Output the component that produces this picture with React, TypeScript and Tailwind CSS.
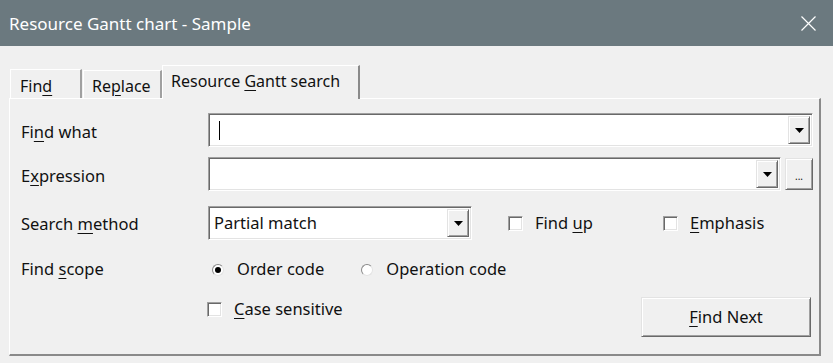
import React from 'react';

const sunken =
  'border-t border-l border-t-[#a0a0a0] border-l-[#a0a0a0] border-b border-r border-b-white border-r-white shadow-[inset_1px_1px_0_#696969,inset_-1px_-1px_0_#e3e3e3]';
const raised =
  'border-t border-l border-t-[#e3e3e3] border-l-[#e3e3e3] border-b border-r border-b-[#696969] border-r-[#696969] shadow-[inset_1px_1px_0_#ffffff,inset_-1px_-1px_0_#a0a0a0]';

function Arrow() {
  return (
    <div className={`${raised} w-[22px] h-full bg-[#f0f0f0] flex items-center justify-center`}>
      <svg width="9" height="5" viewBox="0 0 9 5">
        <path d="M0 0h9L4.5 5z" fill="#000" />
      </svg>
    </div>
  );
}

function Combo({ width, text, caret }: { width: string; text?: string; caret?: boolean }) {
  return (
    <div className={`${sunken} ${width} shrink-0 h-[34px] bg-white flex items-stretch p-[2px]`}>
      <div className="flex-1 flex items-center pl-[3px] pt-[1px]">
        {caret && <span className="w-px h-[19px] bg-black ml-[5px]" />}
        {text}
      </div>
      <Arrow />
    </div>
  );
}

function Check({ label, u, rest }: { label: string; u: string; rest: string }) {
  return (
    <div className="flex items-center h-[22px] whitespace-nowrap shrink-0">
      <span className={`${sunken} w-[15px] h-[15px] bg-white shrink-0`} />
      <span className="ml-[12px]">
        {label}
        <u className="underline-offset-[3px]">{u}</u>
        {rest}
      </span>
    </div>
  );
}

function Radio({ on, children }: { on?: boolean; children: React.ReactNode }) {
  return (
    <div className="flex items-center whitespace-nowrap">
      <span className="w-[12px] h-[12px] rounded-full bg-white border border-t-[#8a8a8a] border-l-[#8a8a8a] border-b-[#e3e3e3] border-r-[#e3e3e3] flex items-center justify-center">
        {on && <span className="w-[6px] h-[6px] rounded-full bg-black" />}
      </span>
      <span className="ml-[13px]">{children}</span>
    </div>
  );
}

export default function App() {
  return (
    <div
      className="w-[833px] h-[363px] bg-[#f0f0f0] overflow-hidden text-[16.5px] text-[#111]"
      style={{ fontFamily: '"Noto Sans", sans-serif' }}
    >
      <div className="h-[46px] bg-[#6b797f] flex items-center justify-between pl-[9px] pr-[17px]">
        <span className="text-white text-[17px] mt-[1px]">Resource Gantt chart - Sample</span>
        <svg width="15" height="15" viewBox="0 0 15 15">
          <path d="M0.5 0.5l14 14M14.5 0.5l-14 14" stroke="#fff" strokeWidth="1.2" />
        </svg>
      </div>

      <div className="pl-[9px] pr-[12px] pt-[19px]">
        <div className="flex items-end h-[33px] text-[16px]">
          <div className="ml-[1px] w-[72px] h-[29px] border-t border-l border-white border-r-2 border-r-[#a0a0a0] pl-[9px] pt-[4px]">
            Fin<u className="underline-offset-[3px]">d</u>
          </div>
          <div className="ml-[1px] w-[79px] h-[28px] border-t border-l border-white border-r-2 border-r-[#a0a0a0] pl-[8px] pt-[3px]">
            Re<u className="underline-offset-[3px]">p</u>lace
          </div>
          <div className="relative z-10 -mb-px w-[198px] h-[34px] bg-[#f0f0f0] border-t border-l border-white border-r-2 border-r-[#8a8a8a] pl-[8px] pt-[3px]">
            Resource <u className="underline-offset-[3px]">G</u>antt search
          </div>
        </div>

        <div className="h-[258px] border-t border-l border-white border-r-2 border-b-2 border-r-[#8a8a8a] border-b-[#8a8a8a] pl-[11px] pt-[14px]">
          <div className="flex items-center">
            <div className="w-[187px] shrink-0 pt-[5px]">
              Fi<u className="underline-offset-[3px]">n</u>d what
            </div>
            <Combo width="w-[605px]" caret />
          </div>

          <div className="flex items-center mt-[10px]">
            <div className="w-[187px] shrink-0 pt-[4px]">
              E<u className="underline-offset-[3px]">x</u>pression
            </div>
            <Combo width="w-[573px]" />
            <div className={`${raised} shrink-0 ml-[4px] w-[28px] h-[32px] flex items-end justify-center pb-[8px] text-[10px] leading-none`}>
              ...
            </div>
          </div>

          <div className="flex items-center mt-[15px]">
            <div className="w-[187px] shrink-0 pt-[2px]">
              Search <u className="underline-offset-[3px]">m</u>ethod
            </div>
            <Combo width="w-[264px]" text="Partial match" />
            <div className="ml-[36px] w-[155px] shrink-0">
              <Check label="Find " u="u" rest="p" />
            </div>
            <Check label="" u="E" rest="mphasis" />
          </div>

          <div className="flex items-center mt-[17px] h-[24px] pt-[1px]">
            <div className="w-[191px] shrink-0">
              Find <u className="underline-offset-[3px]">s</u>cope
            </div>
            <Radio on>Order code</Radio>
            <div className="ml-[37px]">
              <Radio>Operation code</Radio>
            </div>
          </div>

          <div className="flex items-start mt-[16px] pr-[8px]">
            <div className="w-[186px] shrink-0" />
            <div className="pt-[1px]">
              <Check label="" u="C" rest="ase sensitive" />
            </div>
            <div className={`${raised} ml-auto w-[170px] h-[40px] flex items-center justify-center pt-[1px]`}>
              <span>
                <u className="underline-offset-[3px]">F</u>ind Next
              </span>
            </div>
          </div>
        </div>
      </div>
    </div>
  );
}
